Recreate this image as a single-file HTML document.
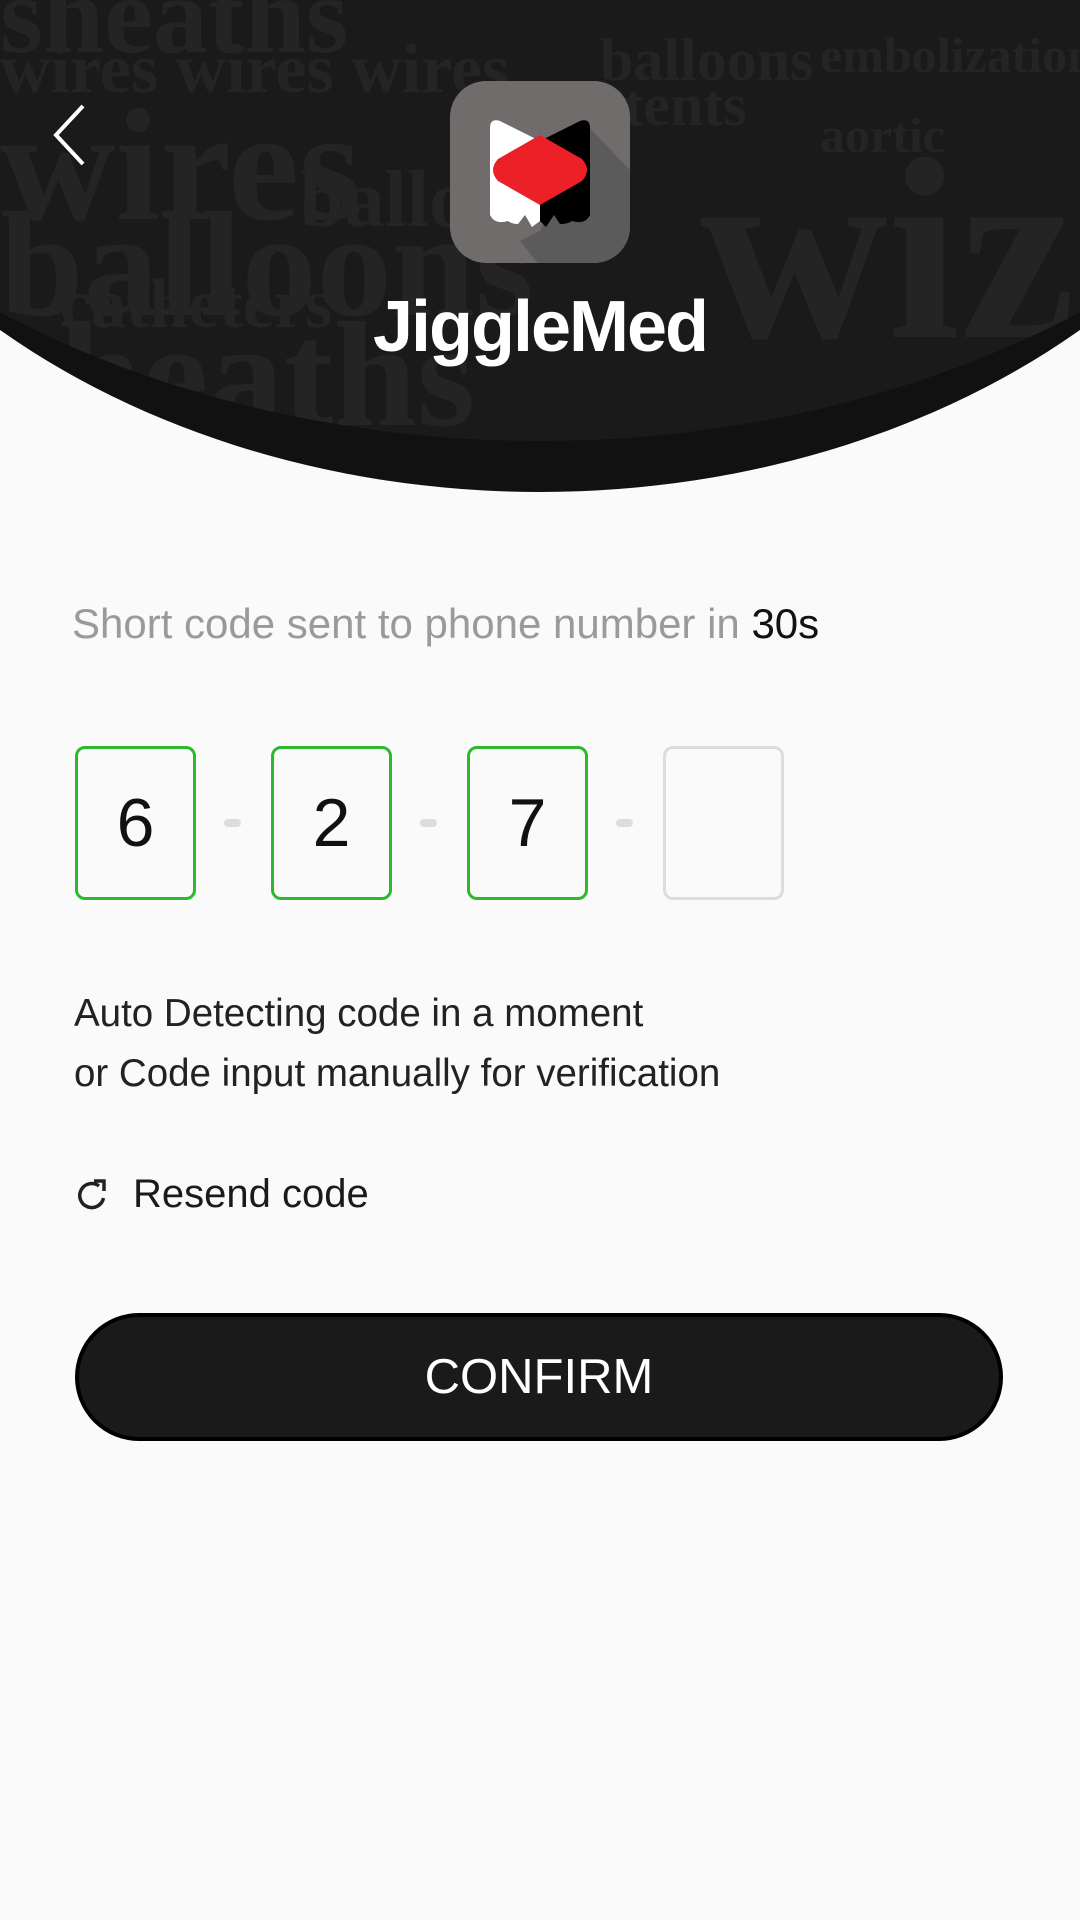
<!DOCTYPE html>
<html><head><meta charset="utf-8"><style>
*{margin:0;padding:0;box-sizing:border-box}
body{width:1080px;height:1920px;background:#fafafa;position:relative;overflow:hidden;font-family:"Liberation Sans",sans-serif}
.hdr{position:absolute;left:-260px;top:-744px;width:1600px;height:1236px;border-radius:50%;background:#111;overflow:hidden}
.inner{position:absolute;left:-140px;top:-233px;width:1880px;height:1418px;border-radius:50%;background:#1a1a1a;overflow:hidden}
.tex{position:absolute;left:400px;top:977px;width:1080px;height:460px;font-family:"Liberation Serif",serif;font-weight:bold;color:#242424;line-height:1}
.tex span{position:absolute;white-space:nowrap}
.logo{position:absolute;left:450px;top:81px;width:180px;height:182px;border-radius:36px;background:#6f6c6b;overflow:hidden}
.name{position:absolute;left:0;width:1080px;top:286px;text-align:center;color:#fff;font-size:72px;font-weight:bold;letter-spacing:-2px}
.box{position:absolute;top:746px;width:121px;height:154px;border:3px solid #2eb82e;border-radius:10px;font-size:68px;color:#111;text-align:center;line-height:148px}
.dash{position:absolute;top:819px;width:17px;height:8px;border-radius:4px;background:#ddd}
</style></head><body>
<div class="hdr"><div class="inner"><div class="tex">
<span style="left:0;top:-40px;font-size:110px">sheaths</span>
<span style="left:0;top:35px;font-size:70px">wires wires wires</span>
<span style="left:0;top:85px;font-size:160px">wires</span>
<span style="left:0;top:190px;font-size:150px">balloons</span>
<span style="left:300px;top:160px;font-size:80px">balloon</span>
<span style="left:60px;top:270px;font-size:70px">catheters</span>
<span style="left:0;top:300px;font-size:150px">sheaths</span>
<span style="left:600px;top:30px;font-size:60px">balloons</span>
<span style="left:600px;top:75px;font-size:60px">stents</span>
<span style="left:820px;top:30px;font-size:50px">embolization</span>
<span style="left:820px;top:110px;font-size:50px">aortic</span>
<span style="left:700px;top:120px;font-size:260px">wiz</span>
</div></div></div>
<svg style="position:absolute;left:50px;top:103px" width="40" height="64" viewBox="0 0 40 64"><path d="M33 3 L6 32 L33 61" fill="none" stroke="#fff" stroke-width="4"/></svg>
<div class="logo"><svg width="180" height="182" viewBox="0 0 180 182">
<path d="M135 42 L200 110 L200 210 L110 210 L70 160 L90 150 Z" fill="#555" opacity=".75"/>
<path d="M40 47 Q40 37 50 40 L90 60 L90 140 L82 146 L75 134 L68 143 Q62 143 58 140 Q45 144 40 134 Z" fill="#fff"/>
<path d="M140 47 Q140 37 130 40 L90 60 L90 140 L96 146 L104 134 L110 143 Q118 143 122 140 Q135 144 140 134 Z" fill="#000"/>
<path d="M90 54 L132 78 Q142 89 132 100 L90 124 L48 100 Q38 89 48 78 Z" fill="#ec2027"/>
</svg></div>
<div class="name">JiggleMed</div>
<div style="position:absolute;left:72px;top:600px;font-size:42px;color:#9a9a9a">Short code sent to phone number in <span style="color:#111">30s</span></div>
<div class="box" style="left:75px">6</div>
<div class="dash" style="left:224px"></div>
<div class="box" style="left:271px">2</div>
<div class="dash" style="left:420px"></div>
<div class="box" style="left:467px">7</div>
<div class="dash" style="left:616px"></div>
<div class="box" style="left:663px;border-color:#ddd"></div>
<div style="position:absolute;left:74px;top:984px;font-size:38.5px;line-height:60px;color:#222">Auto Detecting code in a moment<br>or Code input manually for verification</div>
<svg style="position:absolute;left:74px;top:1178px" width="36" height="36" viewBox="0 0 36 36"><path d="M29.5 20 A12 12 0 1 1 25 8" fill="none" stroke="#222" stroke-width="3.5"/><path d="M20 3 L30 3 L30 13" fill="none" stroke="#222" stroke-width="3.5"/></svg>
<div style="position:absolute;left:133px;top:1172px;font-size:40px;color:#1a1a1a">Resend code</div>
<div style="position:absolute;left:75px;top:1313px;width:928px;height:128px;border-radius:64px;background:#1a1a1a;border:4px solid #000;color:#fff;font-size:49px;text-align:center;line-height:120px">CONFIRM</div>
</body></html>
